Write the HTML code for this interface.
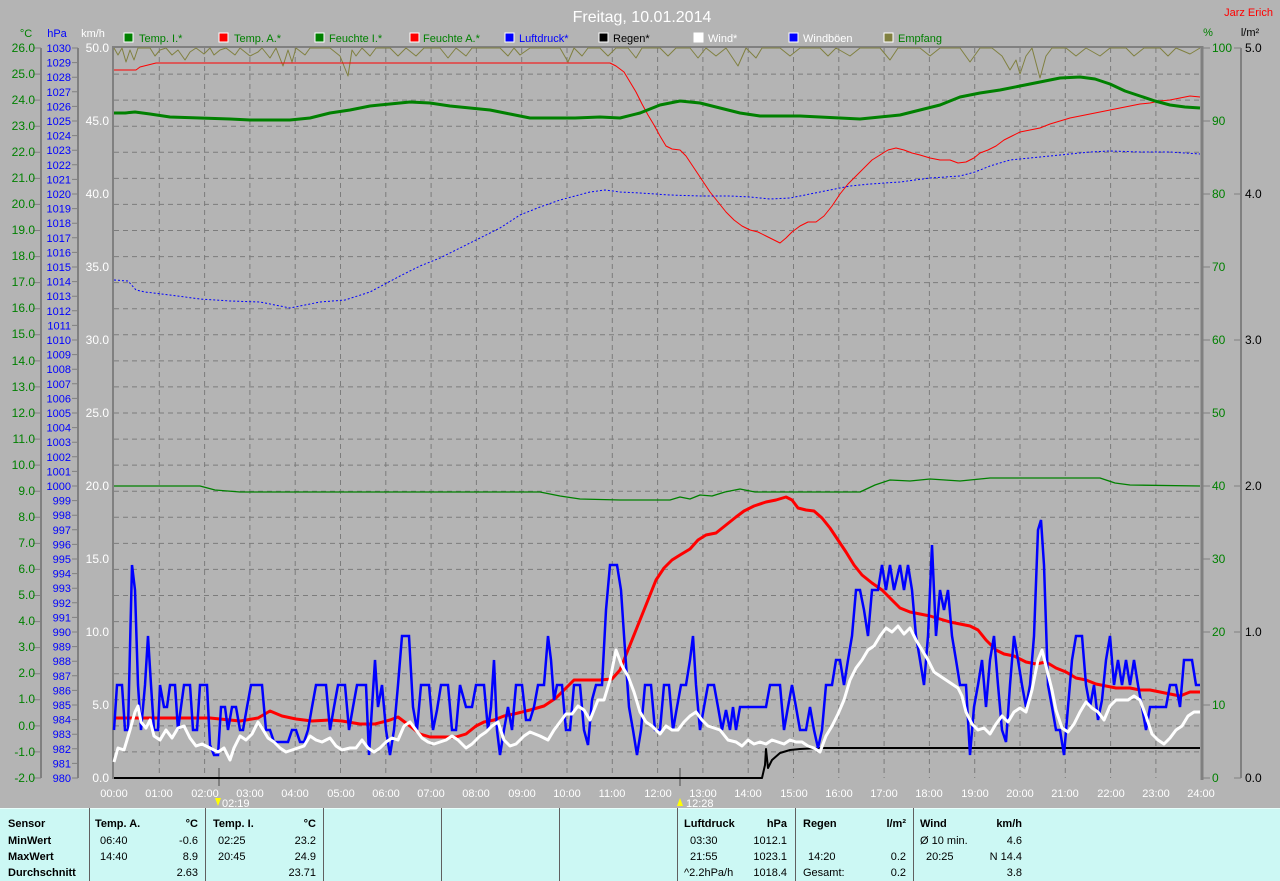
<!DOCTYPE html>
<html><head><meta charset="utf-8"><style>
html,body{margin:0;padding:0;background:#b4b4b4;}
svg{display:block;font-family:"Liberation Sans",Arial,sans-serif;}
</style></head><body>
<svg width="1280" height="881" xmlns="http://www.w3.org/2000/svg">
<rect width="1280" height="881" fill="#b4b4b4"/>
<text x="642" y="22" font-size="16" fill="#fff" text-anchor="middle">Freitag, 10.01.2014</text>
<text x="1273" y="16" font-size="11" fill="#f00" text-anchor="end">Jarz Erich</text>
<g font-size="11">
<text x="26" y="37" fill="#008000" text-anchor="middle">°C</text>
<text x="57" y="37" fill="#00f" text-anchor="middle">hPa</text>
<text x="93" y="37" fill="#fff" text-anchor="middle">km/h</text>
<text x="1208" y="36" fill="#008000" text-anchor="middle">%</text>
<text x="1250" y="36" fill="#000" text-anchor="middle">l/m²</text>
</g>
<!-- legend -->
<g font-size="11">
<rect x="124" y="33" width="9" height="9" fill="#008000" stroke="#fff"/><text x="139" y="42" fill="#008000">Temp. I.*</text>
<rect x="219" y="33" width="9" height="9" fill="#f00" stroke="#fff"/><text x="234" y="42" fill="#008000">Temp. A.*</text>
<rect x="315" y="33" width="9" height="9" fill="#008000" stroke="#fff"/><text x="329" y="42" fill="#008000">Feuchte I.*</text>
<rect x="410" y="33" width="9" height="9" fill="#f00" stroke="#fff"/><text x="423" y="42" fill="#008000">Feuchte A.*</text>
<rect x="505" y="33" width="9" height="9" fill="#00f" stroke="#fff"/><text x="519" y="42" fill="#00f">Luftdruck*</text>
<rect x="599" y="33" width="9" height="9" fill="#000" stroke="#fff"/><text x="613" y="42" fill="#000">Regen*</text>
<rect x="694" y="33" width="9" height="9" fill="#fff" stroke="#fff"/><text x="708" y="42" fill="#fff">Wind*</text>
<rect x="789" y="33" width="9" height="9" fill="#00f" stroke="#fff"/><text x="803" y="42" fill="#fff">Windböen</text>
<rect x="884" y="33" width="9" height="9" fill="#808040" stroke="#fff"/><text x="898" y="42" fill="#008000">Empfang</text>
</g>
<!-- grid -->
<g stroke="#7c7c7c" stroke-dasharray="5,4" stroke-width="1">
<path d="M114 74.1H1201M114 100.1H1201M114 126.2H1201M114 152.3H1201M114 178.4H1201M114 204.4H1201M114 230.5H1201M114 256.6H1201M114 282.6H1201M114 308.7H1201M114 334.8H1201M114 360.9H1201M114 386.9H1201M114 413H1201M114 439.1H1201M114 465.1H1201M114 491.2H1201M114 517.3H1201M114 543.4H1201M114 569.4H1201M114 595.5H1201M114 621.6H1201M114 647.6H1201M114 673.7H1201M114 699.8H1201M114 725.9H1201M114 751.9H1201"/>
<path d="M159.3 48V778M204.6 48V778M249.9 48V778M295.2 48V778M340.5 48V778M385.8 48V778M431.1 48V778M476.4 48V778M521.7 48V778M567 48V778M612.3 48V778M657.6 48V778M702.9 48V778M748.2 48V778M793.5 48V778M838.8 48V778M884.1 48V778M929.4 48V778M974.7 48V778M1020 48V778M1065.3 48V778M1110.6 48V778M1155.9 48V778"/>
</g>
<!-- axes -->
<g stroke="#808080" stroke-width="2" fill="none">
<path d="M41 48V778M78 48V778"/>
<path d="M113 46V779"/>
<path d="M113 47H1203"/>
<path d="M1202 46V780" stroke-width="3"/>
<path d="M1241 48V778"/>
</g>
<g stroke="#808080" stroke-width="1">
<path d="M33 48H41M33 74.1H41M33 100.1H41M33 126.2H41M33 152.3H41M33 178.4H41M33 204.4H41M33 230.5H41M33 256.6H41M33 282.6H41M33 308.7H41M33 334.8H41M33 360.9H41M33 386.9H41M33 413H41M33 439.1H41M33 465.1H41M33 491.2H41M33 517.3H41M33 543.4H41M33 569.4H41M33 595.5H41M33 621.6H41M33 647.6H41M33 673.7H41M33 699.8H41M33 725.9H41M33 751.9H41M33 778H41"/>
<path d="M72 48H78M72 121H78M72 194H78M72 267H78M72 340H78M72 413H78M72 486H78M72 559H78M72 632H78M72 705H78M72 778H78"/>
<path d="M72 62.6H78M72 77.2H78M72 91.8H78M72 106.4H78M72 135.6H78M72 150.2H78M72 164.8H78M72 179.4H78M72 208.6H78M72 223.2H78M72 237.8H78M72 252.4H78M72 281.6H78M72 296.2H78M72 310.8H78M72 325.4H78M72 354.6H78M72 369.2H78M72 383.8H78M72 398.4H78M72 427.6H78M72 442.2H78M72 456.8H78M72 471.4H78M72 500.6H78M72 515.2H78M72 529.8H78M72 544.4H78M72 573.6H78M72 588.2H78M72 602.8H78M72 617.4H78M72 646.6H78M72 661.2H78M72 675.8H78M72 690.4H78M72 719.6H78M72 734.2H78M72 748.8H78M72 763.4H78"/>
<path d="M1203 48H1210M1203 121H1210M1203 194H1210M1203 267H1210M1203 340H1210M1203 413H1210M1203 486H1210M1203 559H1210M1203 632H1210M1203 705H1210M1203 778H1210"/>
<path d="M1234 48H1241M1234 194H1241M1234 340H1241M1234 486H1241M1234 632H1241M1234 778H1241"/>
</g>
<!-- C labels -->
<g font-size="12" fill="#008000" text-anchor="end">
<text x="35" y="52">26.0</text><text x="35" y="78">25.0</text><text x="35" y="104">24.0</text><text x="35" y="130">23.0</text><text x="35" y="156">22.0</text><text x="35" y="182">21.0</text><text x="35" y="208">20.0</text><text x="35" y="234">19.0</text><text x="35" y="260">18.0</text><text x="35" y="286">17.0</text><text x="35" y="312">16.0</text><text x="35" y="338">15.0</text><text x="35" y="365">14.0</text><text x="35" y="391">13.0</text><text x="35" y="417">12.0</text><text x="35" y="443">11.0</text><text x="35" y="469">10.0</text><text x="35" y="495">9.0</text><text x="35" y="521">8.0</text><text x="35" y="547">7.0</text><text x="35" y="573">6.0</text><text x="35" y="599">5.0</text><text x="35" y="625">4.0</text><text x="35" y="651">3.0</text><text x="35" y="677">2.0</text><text x="35" y="703">1.0</text><text x="35" y="730">0.0</text><text x="35" y="756">-1.0</text><text x="35" y="782">-2.0</text>
</g>
<g font-size="11" fill="#00f" text-anchor="end">
<text x="71" y="52">1030</text><text x="71" y="66.6">1029</text><text x="71" y="81.2">1028</text><text x="71" y="95.8">1027</text><text x="71" y="110.4">1026</text><text x="71" y="125">1025</text><text x="71" y="139.6">1024</text><text x="71" y="154.2">1023</text><text x="71" y="168.8">1022</text><text x="71" y="183.4">1021</text><text x="71" y="198">1020</text><text x="71" y="212.6">1019</text><text x="71" y="227.2">1018</text><text x="71" y="241.8">1017</text><text x="71" y="256.4">1016</text><text x="71" y="271">1015</text><text x="71" y="285.6">1014</text><text x="71" y="300.2">1013</text><text x="71" y="314.8">1012</text><text x="71" y="329.4">1011</text><text x="71" y="344">1010</text><text x="71" y="358.6">1009</text><text x="71" y="373.2">1008</text><text x="71" y="387.8">1007</text><text x="71" y="402.4">1006</text><text x="71" y="417">1005</text><text x="71" y="431.6">1004</text><text x="71" y="446.2">1003</text><text x="71" y="460.8">1002</text><text x="71" y="475.4">1001</text><text x="71" y="490">1000</text><text x="71" y="504.6">999</text><text x="71" y="519.2">998</text><text x="71" y="533.8">997</text><text x="71" y="548.4">996</text><text x="71" y="563">995</text><text x="71" y="577.6">994</text><text x="71" y="592.2">993</text><text x="71" y="606.8">992</text><text x="71" y="621.4">991</text><text x="71" y="636">990</text><text x="71" y="650.6">989</text><text x="71" y="665.2">988</text><text x="71" y="679.8">987</text><text x="71" y="694.4">986</text><text x="71" y="709">985</text><text x="71" y="723.6">984</text><text x="71" y="738.2">983</text><text x="71" y="752.8">982</text><text x="71" y="767.4">981</text><text x="71" y="782">980</text>
</g>
<g font-size="12" fill="#fff" text-anchor="end">
<text x="109" y="52">50.0</text><text x="109" y="125">45.0</text><text x="109" y="198">40.0</text><text x="109" y="271">35.0</text><text x="109" y="344">30.0</text><text x="109" y="417">25.0</text><text x="109" y="490">20.0</text><text x="109" y="563">15.0</text><text x="109" y="636">10.0</text><text x="109" y="709">5.0</text><text x="109" y="782">0.0</text>
</g>
<g font-size="12" fill="#008000">
<text x="1212" y="52">100</text><text x="1212" y="125">90</text><text x="1212" y="198">80</text><text x="1212" y="271">70</text><text x="1212" y="344">60</text><text x="1212" y="417">50</text><text x="1212" y="490">40</text><text x="1212" y="563">30</text><text x="1212" y="636">20</text><text x="1212" y="709">10</text><text x="1212" y="782">0</text>
</g>
<g font-size="12" fill="#000">
<text x="1245" y="52">5.0</text><text x="1245" y="198">4.0</text><text x="1245" y="344">3.0</text><text x="1245" y="490">2.0</text><text x="1245" y="636">1.0</text><text x="1245" y="782">0.0</text>
</g>
<!-- time labels -->
<g font-size="11" fill="#fff" text-anchor="middle">
<text x="114" y="797">00:00</text><text x="159" y="797">01:00</text><text x="205" y="797">02:00</text><text x="250" y="797">03:00</text><text x="295" y="797">04:00</text><text x="341" y="797">05:00</text><text x="386" y="797">06:00</text><text x="431" y="797">07:00</text><text x="476" y="797">08:00</text><text x="522" y="797">09:00</text><text x="567" y="797">10:00</text><text x="612" y="797">11:00</text><text x="658" y="797">12:00</text><text x="703" y="797">13:00</text><text x="748" y="797">14:00</text><text x="794" y="797">15:00</text><text x="839" y="797">16:00</text><text x="884" y="797">17:00</text><text x="929" y="797">18:00</text><text x="975" y="797">19:00</text><text x="1020" y="797">20:00</text><text x="1065" y="797">21:00</text><text x="1111" y="797">22:00</text><text x="1156" y="797">23:00</text><text x="1201" y="797">24:00</text>
</g>
<path d="M219 768V786M680 768V786" stroke="#808080" stroke-width="2"/>
<polygon points="215,798 221,798 218,806" fill="#ff0"/><text x="222" y="807" font-size="11" fill="#fff">02:19</text>
<polygon points="677,806 683,806 680,798" fill="#ff0"/><text x="686" y="807" font-size="11" fill="#fff">12:28</text>
<!-- series -->
<g fill="none" stroke-linejoin="round">
<polyline stroke="#808040" stroke-width="1" points="114,48 118,55 122,48 126,62 130,50 134,60 138,48 150,48 155,56 160,50 166,48 172,55 178,50 185,60 190,52 196,48 204,54 210,48 214,55 220,50 226,48 235,55 240,48 250,56 258,52 262,48 270,58 276,48 283,66 288,50 292,62 296,48 305,55 310,48 330,48 340,56 348,76 352,50 356,56 362,48 370,56 376,48 390,48 398,56 406,48 416,56 424,48 440,48 448,58 456,48 466,56 472,48 500,48 508,56 514,48 520,55 530,48 560,48 568,62 574,48 582,56 588,48 600,48 608,56 616,48 628,48 636,58 642,48 660,48 668,56 676,48 690,48 698,58 706,48 716,56 726,48 738,66 746,48 756,58 762,48 780,48 790,56 800,48 820,48 828,56 836,48 850,56 860,48 880,48 890,60 898,48 920,48 930,56 940,48 960,48 970,62 980,48 992,48 1002,56 1010,70 1016,60 1020,74 1026,56 1032,48 1040,78 1046,56 1052,48 1066,48 1076,56 1086,48 1100,56 1110,48 1126,48 1134,56 1144,48 1160,48 1168,56 1176,48 1190,54 1200,48"/>
<polyline stroke="#f00" stroke-width="1" points="114,70 136,70 140,67 148,65 156,63 165,63 610,63 616,66 624,72 630,82 636,92 642,104 648,115 654,125 660,136 666,146 672,149 680,150 686,156 694,168 702,180 710,192 718,202 726,212 734,220 742,226 750,230 758,232 766,236 774,240 780,243 786,238 792,232 800,226 808,222 816,222 824,216 832,206 840,194 848,184 856,176 864,168 872,160 880,155 888,150 896,148 904,150 912,153 920,155 930,158 940,160 950,160 958,163 966,162 974,158 980,153 988,150 996,146 1004,140 1012,136 1020,132 1030,130 1040,128 1050,124 1060,121 1070,118 1080,116 1090,114 1100,112 1110,110 1120,108 1130,106 1140,104 1150,103 1160,101 1170,100 1180,98 1190,96 1200,97"/>
<polyline stroke="#008000" stroke-width="3" points="114,113 125,113 135,112 150,114 170,117 200,118 230,119 250,120 290,120 310,118 330,113 350,110 370,106 390,104 410,102 430,103 450,106 470,108 490,110 510,114 530,118 550,118 575,118 600,117 620,118 640,113 660,105 680,101 700,103 720,108 740,113 760,116 780,116 800,116 820,117 840,118 860,119 880,117 900,115 920,110 940,105 960,97 980,93 1000,90 1020,86 1040,82 1060,78 1080,77 1095,79 1110,84 1125,91 1140,96 1155,101 1170,105 1185,107 1200,108"/>
<polyline stroke="#00f" stroke-width="1" stroke-dasharray="2,2" points="114,280 128,281 136,290 145,292 170,295 200,299 230,301 260,302 290,308 305,305 320,302 345,300 370,292 385,284 400,276 420,266 440,258 460,248 480,238 500,228 520,215 540,207 560,200 575,196 590,192 605,190 620,192 640,193 670,195 700,196 730,196 750,197 770,199 790,198 810,194 830,190 850,186 870,184 900,182 930,178 960,176 975,172 990,166 1010,160 1030,158 1050,156 1070,154 1090,152 1110,151 1140,152 1170,152 1200,154"/>
<polyline stroke="#008000" stroke-width="1.3" points="114,486 200,486 215,490 240,492 540,492 560,496 580,499 620,500 670,500 680,497 690,499 700,495 712,496 725,492 740,489 755,492 800,492 860,492 875,485 890,480 910,481 930,479 960,481 990,478 1020,478 1100,478 1115,483 1130,485 1200,486"/>
<polyline stroke="#f00" stroke-width="3" points="114,718 160,718 210,718 240,721 258,718 270,711 282,716 296,719 312,721 330,720 342,721 360,724 375,724 390,720 398,717 410,726 420,734 430,737 440,737 456,737 466,734 476,726 484,722 494,720 504,716 514,714 530,710 544,706 556,698 566,688 574,680 586,680 600,680 612,679 620,670 628,650 636,630 644,610 650,595 656,580 664,568 672,560 680,555 690,549 698,540 706,535 716,533 726,525 736,517 744,511 754,506 766,502 776,500 786,497 792,500 798,508 806,510 814,511 822,518 830,528 838,540 846,552 854,565 862,575 872,583 882,590 890,598 900,608 910,612 920,614 930,616 940,619 950,622 960,624 970,626 978,630 986,640 996,650 1004,654 1014,656 1026,662 1036,664 1046,662 1056,668 1066,672 1076,678 1086,680 1096,684 1106,686 1116,688 1130,688 1140,690 1150,690 1160,692 1170,694 1180,696 1190,692 1200,692"/>
<polyline stroke="#000" stroke-width="2" points="114,778 762,778 765,765 766,749 768,768 772,760 780,753 790,750 800,749 820,748 1200,748"/>
<polyline stroke="#00f" stroke-width="2.5" stroke-linejoin="miter" points="114,730 117,685 122,685 125,730 128,730 132,565 135,590 138,685 141,730 145,685 148,636 151,685 154,730 158,730 160,685 164,707 167,707 170,685 175,685 178,730 181,707 184,685 190,685 193,730 197,730 200,685 207,685 210,745 214,755 218,755 221,707 225,707 228,730 232,707 236,707 240,730 243,730 247,707 251,685 262,685 266,730 270,730 274,742 288,742 292,730 296,730 300,742 304,742 308,730 312,707 316,685 326,685 330,730 334,707 338,685 345,685 349,730 353,707 357,685 366,685 369,755 372,707 375,660 378,707 382,685 386,730 390,755 394,730 398,685 402,636 409,636 413,707 417,730 421,685 429,685 433,730 437,710 441,685 448,685 452,730 456,730 460,685 466,707 472,707 476,685 484,685 488,730 491,707 494,660 497,730 500,755 504,730 508,707 512,730 516,685 522,685 526,720 530,720 534,707 538,685 544,685 548,636 551,660 554,700 557,685 562,685 566,730 570,730 574,685 580,685 584,730 588,745 592,700 596,685 602,685 606,610 610,565 617,565 621,590 625,650 629,707 633,730 637,755 641,730 645,685 651,685 655,730 660,730 664,685 669,685 673,730 677,707 681,685 686,685 690,660 693,636 696,685 700,730 704,707 708,685 714,685 718,707 722,730 726,710 730,730 733,707 736,730 740,707 766,707 770,685 780,685 784,730 788,707 792,685 796,707 800,730 806,730 810,707 814,730 818,748 822,730 826,685 832,685 836,660 840,660 844,685 848,660 852,636 856,590 860,590 864,610 868,636 872,590 878,590 882,565 886,590 890,565 894,590 900,565 904,590 908,565 912,590 916,636 920,660 924,685 928,636 932,545 936,636 940,590 944,610 948,590 952,636 956,660 960,685 966,685 970,755 974,707 978,685 982,660 986,707 990,660 994,636 998,685 1002,730 1006,742 1010,685 1014,636 1018,660 1022,685 1026,707 1030,685 1034,636 1038,530 1041,520 1044,565 1048,685 1052,707 1056,730 1060,730 1064,755 1068,707 1072,660 1076,636 1082,636 1086,685 1090,707 1094,685 1098,720 1102,700 1106,660 1110,636 1114,685 1118,660 1122,685 1126,660 1130,685 1134,660 1138,685 1142,707 1146,730 1150,707 1166,707 1170,685 1176,685 1180,707 1184,660 1192,660 1196,685 1200,685"/>
<polyline stroke="#fff" stroke-width="3" points="114,762 118,748 124,750 130,730 135,712 138,706 141,722 146,728 150,720 154,736 160,740 166,730 172,738 178,728 184,726 190,738 196,746 202,744 210,748 218,752 224,748 230,760 234,748 240,736 246,740 252,734 258,722 262,728 268,738 274,742 280,748 286,752 292,750 298,748 304,746 310,736 316,740 322,742 330,738 336,746 342,750 350,748 356,748 362,740 368,748 374,752 380,748 386,742 392,738 398,740 404,726 410,722 416,730 422,738 428,742 434,744 440,742 446,740 452,736 458,740 466,748 472,744 480,736 486,732 492,726 498,722 504,740 510,746 516,744 524,736 530,732 540,736 548,740 554,730 560,722 566,714 572,714 578,706 584,710 590,720 598,700 604,700 610,680 616,650 622,666 628,676 634,692 640,712 646,722 652,726 660,734 666,726 672,730 678,730 684,722 690,716 696,712 702,720 708,726 714,728 720,730 728,740 736,742 742,746 748,740 754,744 760,742 766,744 772,740 778,742 784,744 790,740 796,742 802,742 808,746 814,748 820,752 826,736 832,726 838,714 844,700 850,680 856,668 862,660 868,650 874,646 880,636 886,628 892,632 898,626 904,634 910,628 916,640 922,650 928,660 934,672 940,676 946,680 952,684 958,688 962,696 966,712 972,724 978,730 984,728 990,734 996,724 1002,716 1008,722 1014,712 1020,708 1026,712 1032,690 1038,660 1042,650 1046,666 1052,690 1056,710 1062,728 1068,732 1074,724 1080,712 1086,702 1092,708 1098,712 1104,720 1110,706 1116,700 1122,700 1128,700 1134,696 1140,700 1146,716 1152,734 1158,740 1164,744 1170,738 1176,730 1182,726 1188,716 1194,712 1200,712"/>
</g>
<!-- table -->
<rect x="0" y="808" width="1280" height="73" fill="#ccf8f4"/>
<line x1="0" y1="808.5" x2="1280" y2="808.5" stroke="#e8fffc"/>
<g stroke="#606060" stroke-width="1">
<path d="M89.5 808V881M205.5 808V881M323.5 808V881M441.5 808V881M559.5 808V881M677.5 808V881M795.5 808V881M913.5 808V881"/>
</g>
<g font-size="11" fill="#000">
<g font-weight="bold">
<text x="8" y="827">Sensor</text><text x="8" y="844">MinWert</text><text x="8" y="860">MaxWert</text><text x="8" y="876">Durchschnitt</text>
<text x="95" y="827">Temp. A.</text><text x="198" y="827" text-anchor="end">°C</text>
<text x="213" y="827">Temp. I.</text><text x="316" y="827" text-anchor="end">°C</text>
<text x="684" y="827">Luftdruck</text><text x="787" y="827" text-anchor="end">hPa</text>
<text x="803" y="827">Regen</text><text x="906" y="827" text-anchor="end">l/m²</text>
<text x="920" y="827">Wind</text><text x="1022" y="827" text-anchor="end">km/h</text>
</g>
<text x="100" y="844">06:40</text><text x="198" y="844" text-anchor="end">-0.6</text>
<text x="100" y="860">14:40</text><text x="198" y="860" text-anchor="end">8.9</text>
<text x="198" y="876" text-anchor="end">2.63</text>
<text x="218" y="844">02:25</text><text x="316" y="844" text-anchor="end">23.2</text>
<text x="218" y="860">20:45</text><text x="316" y="860" text-anchor="end">24.9</text>
<text x="316" y="876" text-anchor="end">23.71</text>
<text x="690" y="844">03:30</text><text x="787" y="844" text-anchor="end">1012.1</text>
<text x="690" y="860">21:55</text><text x="787" y="860" text-anchor="end">1023.1</text>
<text x="684" y="876">^2.2hPa/h</text><text x="787" y="876" text-anchor="end">1018.4</text>
<text x="808" y="860">14:20</text><text x="906" y="860" text-anchor="end">0.2</text>
<text x="803" y="876">Gesamt:</text><text x="906" y="876" text-anchor="end">0.2</text>
<text x="920" y="844">Ø 10 min.</text><text x="1022" y="844" text-anchor="end">4.6</text>
<text x="926" y="860">20:25</text><text x="1022" y="860" text-anchor="end">N 14.4</text>
<text x="1022" y="876" text-anchor="end">3.8</text>
</g>
</svg>
</body></html>
